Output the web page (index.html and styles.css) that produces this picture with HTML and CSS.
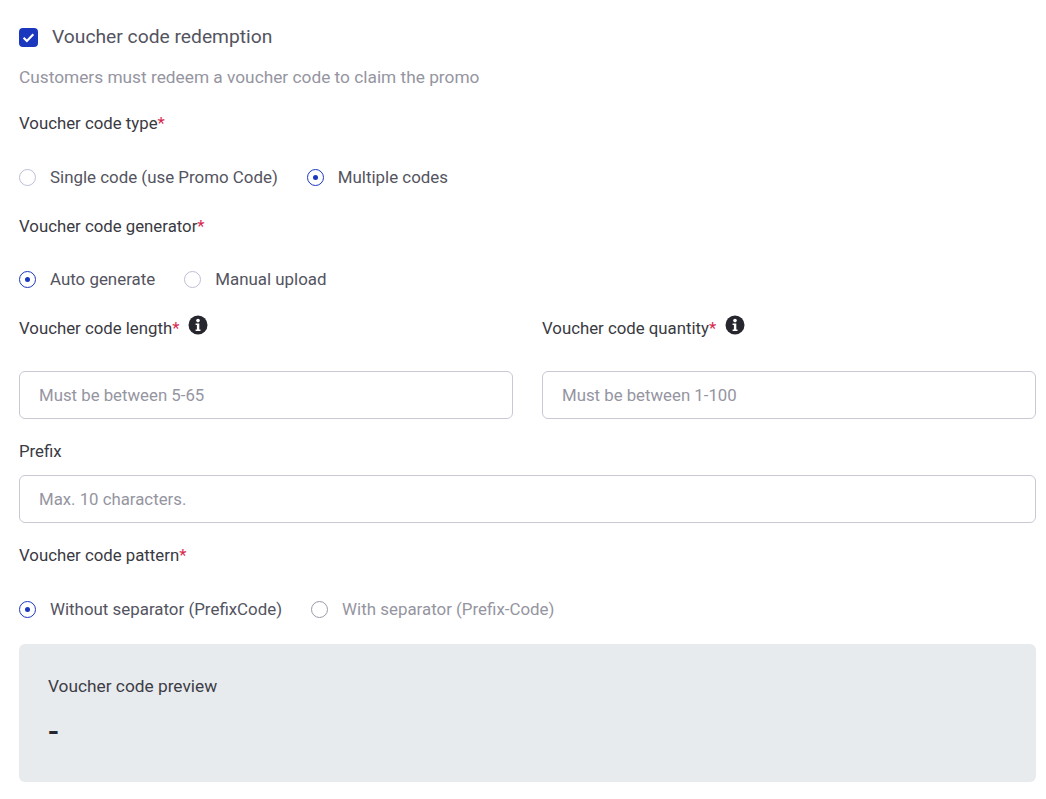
FILE: index.html
```html
<!DOCTYPE html>
<html lang="en">
<head>
<meta charset="utf-8">
<title>Voucher code redemption</title>
<link rel="stylesheet" href="styles.css">
</head>
<body>
<main class="form">
  <div class="check-row">
    <span class="checkbox"><svg width="15" height="15" viewBox="0 0 14 14"><path d="M2.4 7.2l3.1 3 6-6.2" fill="none" stroke="#fff" stroke-width="2"/></svg></span>
    <span class="check-title">Voucher code redemption</span>
  </div>
  <p class="hint">Customers must redeem a voucher code to claim the promo</p>
  <div class="label lab-type">Voucher code type<span class="req">*</span></div>
  <div class="radios r-type">
    <span class="radio"><span class="dot-off"></span>Single code (use Promo Code)</span>
    <span class="radio"><span class="dot-on"></span>Multiple codes</span>
  </div>
  <div class="label lab-gen">Voucher code generator<span class="req">*</span></div>
  <div class="radios r-gen">
    <span class="radio"><span class="dot-on"></span>Auto generate</span>
    <span class="radio"><span class="dot-off"></span>Manual upload</span>
  </div>
  <div class="two-col">
    <div class="col">
      <div class="label lab-info">Voucher code length<span class="req">*</span>
        <svg class="info" width="20" height="20" viewBox="0 0 20 20"><circle cx="10" cy="10" r="9.5" fill="#26262e"/><circle cx="10" cy="5.6" r="1.8" fill="#fff"/><path d="M7.6 8.4h3.7v6h1.2v1.5H7.6v-1.5h1.3v-4.5H7.6z" fill="#fff"/></svg>
      </div>
      <div class="input">Must be between 5-65</div>
    </div>
    <div class="col">
      <div class="label lab-info">Voucher code quantity<span class="req">*</span>
        <svg class="info" width="20" height="20" viewBox="0 0 20 20"><circle cx="10" cy="10" r="9.5" fill="#26262e"/><circle cx="10" cy="5.6" r="1.8" fill="#fff"/><path d="M7.6 8.4h3.7v6h1.2v1.5H7.6v-1.5h1.3v-4.5H7.6z" fill="#fff"/></svg>
      </div>
      <div class="input">Must be between 1-100</div>
    </div>
  </div>
  <div class="label lab-prefix">Prefix</div>
  <div class="input">Max. 10 characters.</div>
  <div class="label lab-pattern">Voucher code pattern<span class="req">*</span></div>
  <div class="radios r-pattern">
    <span class="radio"><span class="dot-on"></span>Without separator (PrefixCode)</span>
    <span class="radio disabled"><span class="dot-off dark"></span>With separator (Prefix-Code)</span>
  </div>
  <section class="preview">
    <div class="preview-label">Voucher code preview</div>
    <div class="preview-value">-</div>
  </section>
</main>
</body>
</html>
```
FILE: styles.css
```css
* { box-sizing: border-box; }
html, body { margin: 0; background: #fff; }
body { font-family: Roboto, "Liberation Sans", sans-serif; font-size: 16.8px; color: #33333b; overflow: hidden; }
.form { padding: 0 10px 0 19px; height: 799px; }
.check-row { display: flex; align-items: center; gap: 14px; height: 24px; margin-top: 25px; }
.checkbox { width: 19px; height: 19px; border-radius: 4px; background: #1a37bd; display: flex; align-items: center; justify-content: center; }
.check-title { font-size: 19.25px; line-height: 24px; color: #54545f; }
.hint { margin: 18px 0 0; font-size: 17.3px; line-height: 20px; color: #9595a1; }
.label { font-size: 16.8px; line-height: 20px; color: #3a3a42; }
.req { color: #d6294f; }
.lab-type { margin-top: 26px; }
.radios { display: flex; height: 20px; align-items: center; color: #54545f; font-size: 16.9px; }
.radio { display: flex; align-items: center; gap: 14px; margin-right: 29px; }
.r-type { margin-top: 34px; }
.lab-gen { margin-top: 29px; }
.r-gen { margin-top: 33px; }
.dot-off, .dot-on { width: 17px; height: 17px; border-radius: 50%; border: 1px solid #bcc0d6; background: #fff; position: relative; flex: none; }
.dot-off.dark { border-color: #9a9aa6; }
.dot-on { border-color: #1a37bd; }
.dot-on::after { content: ""; position: absolute; left: 5px; top: 5px; width: 5px; height: 5px; border-radius: 50%; background: #1a37bd; }
.disabled { color: #9595a1; }
.two-col { display: grid; grid-template-columns: 494px 494px; gap: 29px; margin-top: 29px; }
.lab-info { display: flex; align-items: flex-start; height: 20px; }
.info { margin: -3px 0 0 9px; flex: none; }
.input { height: 48px; border: 1px solid #c8c9d4; border-radius: 6px; padding: 0 19px; display: flex; align-items: center; color: #9595a1; font-size: 16.8px; width: 100%; }
.col .input { margin-top: 33px; }
.lab-prefix { margin-top: 22px; margin-bottom: 14px; }
.lab-pattern { margin-top: 22px; }
.r-pattern { margin-top: 34px; }
.preview { margin-top: 25px; height: 138px; background: #e8ebee; border-radius: 6px; padding: 32px 29px 0; }
.preview-label { font-size: 17.3px; line-height: 20px; color: #3d3d46; }
.preview-value { margin-top: 17px; font-size: 32px; line-height: 36px; font-weight: 500; color: #26262e; }
```
